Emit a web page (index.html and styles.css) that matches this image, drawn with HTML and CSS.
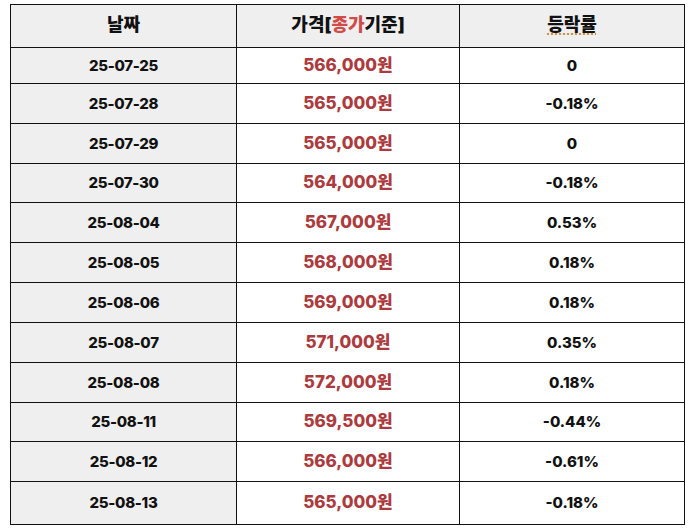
FILE: index.html
```html
<!DOCTYPE html>
<html lang="ko">
<head>
<meta charset="utf-8">
<link rel="stylesheet" href="styles.css">
</head>
<body>
<div class="price-table">
  <div class="tr head">
    <div class="cell gray">날짜</div>
    <div class="cell">가격[<span class="hl">종가</span>기준]</div>
    <div class="cell"><span class="squiggle">등락률</span></div>
  </div>
  <div class="tr"><div class="cell gray date">25-07-25</div><div class="cell price">566,000원</div><div class="cell rate">0</div></div>
  <div class="tr"><div class="cell gray date">25-07-28</div><div class="cell price">565,000원</div><div class="cell rate">-0.18%</div></div>
  <div class="tr"><div class="cell gray date">25-07-29</div><div class="cell price">565,000원</div><div class="cell rate">0</div></div>
  <div class="tr"><div class="cell gray date">25-07-30</div><div class="cell price">564,000원</div><div class="cell rate">-0.18%</div></div>
  <div class="tr"><div class="cell gray date">25-08-04</div><div class="cell price">567,000원</div><div class="cell rate">0.53%</div></div>
  <div class="tr"><div class="cell gray date">25-08-05</div><div class="cell price">568,000원</div><div class="cell rate">0.18%</div></div>
  <div class="tr"><div class="cell gray date">25-08-06</div><div class="cell price">569,000원</div><div class="cell rate">0.18%</div></div>
  <div class="tr"><div class="cell gray date">25-08-07</div><div class="cell price">571,000원</div><div class="cell rate">0.35%</div></div>
  <div class="tr"><div class="cell gray date">25-08-08</div><div class="cell price">572,000원</div><div class="cell rate">0.18%</div></div>
  <div class="tr"><div class="cell gray date">25-08-11</div><div class="cell price">569,500원</div><div class="cell rate">-0.44%</div></div>
  <div class="tr"><div class="cell gray date">25-08-12</div><div class="cell price">566,000원</div><div class="cell rate">-0.61%</div></div>
  <div class="tr"><div class="cell gray date">25-08-13</div><div class="cell price">565,000원</div><div class="cell rate">-0.18%</div></div>
</div>
</body>
</html>
```
FILE: styles.css
```css
html, body {
  margin: 0;
  padding: 0;
  background: #ffffff;
}
body {
  padding: 4px 0 0 10px;
  font-family: Inter, "Noto Sans CJK KR", "Noto Sans", sans-serif;
  color: #111111;
}
.price-table {
  display: grid;
  width: 675px;
  box-sizing: border-box;
  grid-template-columns: 225px 222px 224px;
  grid-template-rows: 42px 35px 39px 39px 38px 39px 39px 39px 39px 39px 38px 39px 42px;
  gap: 1px;
  padding: 1px;
  background: #111111;
}
.tr {
  display: contents;
}
.cell {
  display: flex;
  align-items: center;
  justify-content: center;
  background: #ffffff;
  font-weight: 800;
  line-height: 1;
  padding-bottom: 1px;
  box-sizing: border-box;
}
.cell.gray {
  background: #efefef;
}
.head .cell {
  background: #efefef;
  font-size: 18px;
  font-weight: 900;
  padding-bottom: 2px;
}
.hl { color: #d14b47; }
.squiggle {
  text-decoration: underline dotted #e0802a;
  text-underline-offset: 3px;
}
.date {
  font-size: 15px;
  letter-spacing: -0.3px;
}
.price {
  color: #ad3b3d;
  font-size: 17px;
}
.rate {
  font-size: 15px;
}
```
